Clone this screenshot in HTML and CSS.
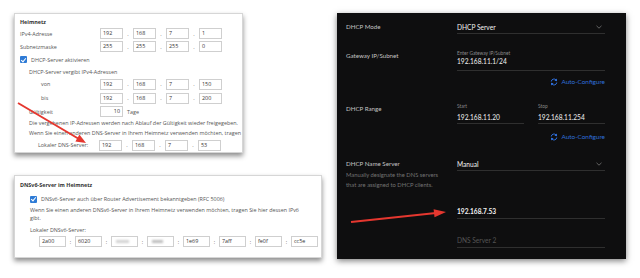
FILE: index.html
```html
<!DOCTYPE html>
<html>
<head>
    <meta charset="UTF-8">
    <title>DHCP Vergleich</title>
    <link rel="stylesheet" href="styles.css">
</head>
<body>
    <div class="page">
        <div class="left">
            <div class="box box-home">
                <div class="box-title">Heimnetz</div>
                <div class="row"><span class="lbl">IPv4-Adresse</span>
                    <span class="ip"><span class="fld">192</span><i>.</i><span class="fld">168</span><i>.</i><span class="fld">7</span><i>.</i><span class="fld">1</span></span></div>
                <div class="row"><span class="lbl">Subnetzmaske</span>
                    <span class="ip"><span class="fld">255</span><i>.</i><span class="fld">255</span><i>.</i><span class="fld">255</span><i>.</i><span class="fld">0</span></span></div>
                <div class="row"><span class="check"></span><span>DHCP-Server aktivieren</span></div>
                <div class="row row-sub"><span class="lbl in1">DHCP-Server vergibt IPv4-Adressen</span></div>
                <div class="row row-tall"><span class="lbl in2">von</span>
                    <span class="ip"><span class="fld">192</span><i>.</i><span class="fld">168</span><i>.</i><span class="fld">7</span><i>.</i><span class="fld">150</span></span></div>
                <div class="row row-tall"><span class="lbl in2">bis</span>
                    <span class="ip"><span class="fld">192</span><i>.</i><span class="fld">168</span><i>.</i><span class="fld">7</span><i>.</i><span class="fld">200</span></span></div>
                <div class="row"><span class="lbl in1">Gültigkeit</span>
                    <span class="fld fld-num">10</span><span class="unit">Tage</span></div>
                <p class="note">Die vergebenen IP-Adressen werden nach Ablauf der Gültigkeit wieder freigegeben.</p>
                <p class="note">Wenn Sie einen anderen DNS-Server in Ihrem Heimnetz verwenden möchten, tragen</p>
                <div class="row row-tall"><span class="lbl in3">Lokaler DNS-Server:</span>
                    <span class="ip"><span class="fld">192</span><i>.</i><span class="fld">168</span><i>.</i><span class="fld">7</span><i>.</i><span class="fld">53</span></span></div>
            </div>

            <div class="box box-v6">
                <div class="box-title">DNSv6-Server im Heimnetz</div>
                <div class="row row-v6"><span class="check"></span><span>DNSv6-Server auch über Router Advertisement bekanntgeben (RFC 5006)</span></div>
                <p class="note note-v6">Wenn Sie einen anderen DNSv6-Server in Ihrem Heimnetz verwenden möchten, tragen Sie hier dessen IPv6<br>gibt.</p>
                <p class="note note-v6 gap">Lokaler DNSv6-Server:</p>
                <div class="ip6">
                    <span class="fld">2a00</span><i>:</i>
                    <span class="fld">6020</span><i>:</i>
                    <span class="fld"><b class="blur"></b></span><i>:</i>
                    <span class="fld"><b class="blur blur-dark"></b></span><i>:</i>
                    <span class="fld">1e69</span><i>:</i>
                    <span class="fld">7aff</span><i>:</i>
                    <span class="fld">fe0f</span><i>:</i>
                    <span class="fld">cc5e</span>
                </div>
            </div>
        </div>

        <div class="dark">
            <div class="dk-row">
                <div class="dk-lbl">DHCP Mode</div>
                <div class="dk-field dk-select">DHCP Server
                    <svg class="chev" width="6" height="4" viewBox="0 0 6 4"><polyline points="0.5,0.8 3,3.2 5.5,0.8" fill="none" stroke="#777" stroke-width="0.8"/></svg>
                </div>
            </div>

            <div class="dk-row">
                <div class="dk-lbl dk-lbl-low">Gateway IP/Subnet</div>
                <div>
                    <div class="dk-small">Enter Gateway IP/Subnet</div>
                    <div class="dk-field dk-val dk-gw">192.168.11.1/24</div>
                    <div class="auto"><svg width="8" height="8" viewBox="0 0 16 16"><path d="M2.5 7 A5.5 5.5 0 0 1 12.2 4" fill="none" stroke="#2f6fdc" stroke-width="2"/><polygon points="14,1 14,6.5 8.8,5.6" fill="#2f6fdc"/><path d="M13.5 9 A5.5 5.5 0 0 1 3.8 12" fill="none" stroke="#2f6fdc" stroke-width="2"/><polygon points="2,15 2,9.5 7.2,10.4" fill="#2f6fdc"/></svg>Auto-Configure</div>
                </div>
            </div>

            <div class="dk-row">
                <div class="dk-lbl dk-lbl-low">DHCP Range</div>
                <div>
                    <div class="range">
                        <div>
                            <div class="dk-small">Start</div>
                            <div class="dk-field dk-val dk-rg">192.168.11.20</div>
                        </div>
                        <div>
                            <div class="dk-small">Stop</div>
                            <div class="dk-field dk-val dk-rg">192.168.11.254</div>
                        </div>
                    </div>
                    <div class="auto auto-2"><svg width="8" height="8" viewBox="0 0 16 16"><path d="M2.5 7 A5.5 5.5 0 0 1 12.2 4" fill="none" stroke="#2f6fdc" stroke-width="2"/><polygon points="14,1 14,6.5 8.8,5.6" fill="#2f6fdc"/><path d="M13.5 9 A5.5 5.5 0 0 1 3.8 12" fill="none" stroke="#2f6fdc" stroke-width="2"/><polygon points="2,15 2,9.5 7.2,10.4" fill="#2f6fdc"/></svg>Auto-Configure</div>
                </div>
            </div>

            <div class="dk-row">
                <div class="dk-ns">
                    <div class="dk-lbl">DHCP Name Server</div>
                    <div class="dk-desc">Manually designate the DNS servers<br>that are assigned to DHCP clients.</div>
                </div>
                <div class="dk-field dk-select dk-manual">Manual
                    <svg class="chev" width="6" height="4" viewBox="0 0 6 4"><polyline points="0.5,0.8 3,3.2 5.5,0.8" fill="none" stroke="#777" stroke-width="0.8"/></svg>
                </div>
            </div>

            <div class="dk-row">
                <div></div>
                <div class="dk-field dk-val dk-dns dk-strong">192.168.7.53</div>
            </div>

            <div class="dk-row">
                <div></div>
                <div class="dk-field dk-dns dk-ph">DNS Server 2</div>
            </div>
        </div>
    </div>

    <svg class="arrows" width="640" height="278" viewBox="0 0 640 278">
        <line x1="18" y1="103" x2="79" y2="139" stroke="#e5372f" stroke-width="2"/>
        <polygon points="86,143 75.4,141.4 79.4,134.5" fill="#e5372f"/>
        <line x1="351" y1="222" x2="436" y2="213" stroke="#e5372f" stroke-width="2"/>
        <polygon points="446,212 434.5,217.2 433.6,209.3" fill="#e5372f"/>
    </svg>
</body>
</html>
```

FILE: styles.css
```css
body {
    margin: 0;
    background: #ffffff;
    width: 640px;
    height: 278px;
    overflow: hidden;
    position: relative;
}

.page {
    display: flex;
    gap: 15px;
    padding: 13px 0 0 14px;
}

.left {
    width: 308px;
    display: flex;
    flex-direction: column;
    gap: 22px;
}

/* Fritz!Box boxes */
.box {
    background: #fff;
    border: 1px solid #d6d6d6;
    box-shadow: 0 3px 5px rgba(0,0,0,0.45);
    font-family: "Open Sans", sans-serif;
    font-size: 5.4px;
    color: #555;
    overflow: hidden;
    box-sizing: border-box;
}

.box-home {
    width: 229px;
    height: 140px;
    padding: 3px 0 0 5px;
}

.box-v6 {
    width: 308px;
    height: 83px;
    padding: 4px 0 0 5px;
}

.box-title {
    font-weight: bold;
    color: #333;
    line-height: 10px;
}

.row {
    display: flex;
    align-items: center;
    height: 13px;
    white-space: nowrap;
}

.row-sub {
    height: 11px;
}

.row-tall {
    height: 14px;
}

.lbl {
    width: 80px;
    box-sizing: border-box;
}

.in1 {
    padding-left: 9px;
}

.in2 {
    padding-left: 21px;
}

.in3 {
    padding-left: 18px;
    width: 79px;
}

.check {
    width: 7px;
    height: 7px;
    background: #2e7bd6;
    border-radius: 1px;
    margin-right: 4px;
    position: relative;
}

.check::after {
    content: "";
    position: absolute;
    left: 2px;
    top: 0.5px;
    width: 2px;
    height: 4px;
    border: solid #fff;
    border-width: 0 1px 1px 0;
    transform: rotate(40deg);
}

.ip, .ip6 {
    display: flex;
    align-items: center;
}

.fld {
    display: inline-block;
    width: 21px;
    height: 9px;
    line-height: 9px;
    border: 1px solid #cfcfcf;
    padding-left: 2px;
    box-sizing: content-box;
    color: #333;
}

.ip .fld {
    width: 19px;
}

.ip i, .ip6 i {
    font-style: normal;
    width: 10px;
    text-align: center;
}

.fld-num {
    width: 19px;
    text-align: right;
    padding: 0 2px 0 0;
}

.unit {
    margin-left: 4px;
}

.note {
    margin: 0;
    padding-left: 9px;
    line-height: 10px;
    white-space: nowrap;
}

.row-v6 {
    height: 14px;
    margin-top: 2px;
    padding-left: 10px;
}

.note-v6 {
    padding-left: 10px;
    line-height: 8px;
}

.note-v6.gap {
    margin-top: 4px;
}

.ip6 {
    margin-top: 2px;
    padding-left: 19px;
}

.ip6 .fld {
    width: 23px;
}

.ip6 i {
    width: 9px;
}

.blur {
    display: inline-block;
    width: 13px;
    height: 3px;
    margin: 0 0 1px 2px;
    background: #d2d2d2;
    filter: blur(1px);
    vertical-align: middle;
}

.blur-dark {
    width: 11px;
    background: #bdbdbd;
}

/* UniFi dark panel */
.dark {
    width: 289px;
    height: 246px;
    background: #0e0e0f;
    box-shadow: 0 2px 6px rgba(0,0,0,0.5);
    padding: 8px 21px 0 9px;
    box-sizing: border-box;
    font-family: Lato, sans-serif;
    color: #c9c9c9;
}

.dk-row {
    display: grid;
    grid-template-columns: 111px 148px;
}

.dk-lbl {
    font-size: 6.2px;
    line-height: 12px;
    color: #c4c4c4;
}

.dk-lbl-low {
    margin-top: 16px;
}

.dk-field {
    border-bottom: 1px solid #2f2f2f;
    color: #f2f2f2;
    font-size: 6.6px;
}

.dk-strong {
    font-weight: bold;
}

.dk-select {
    height: 12px;
    line-height: 12px;
    display: flex;
    justify-content: space-between;
    align-items: center;
    padding-right: 3px;
}

.chev {
    display: block;
}

.dk-small {
    font-size: 4.8px;
    line-height: 6px;
    color: #8a8a8a;
    margin-top: 16px;
}

.dk-val {
    line-height: 10px;
}

.dk-gw {
    padding-bottom: 4px;
}

.range {
    display: grid;
    grid-template-columns: 1fr 1fr;
    gap: 14px;
}

.dk-rg {
    margin-top: 3px;
    padding-bottom: 1px;
}

.auto {
    display: flex;
    justify-content: flex-end;
    align-items: center;
    gap: 3px;
    margin-top: 6px;
    line-height: 10px;
    font-size: 6.4px;
    color: #2f6fdc;
}

.auto-2 {
    margin-top: 8px;
}

.dk-ns {
    margin-top: 16px;
}

.dk-manual {
    margin-top: 15px;
    height: 13px;
}

.dk-desc {
    font-size: 5.8px;
    line-height: 10px;
    color: #737373;
    white-space: nowrap;
}

.dk-dns {
    margin-top: 16px;
    line-height: 10px;
    padding-bottom: 2px;
}

.dk-ph {
    color: #555;
}

.arrows {
    position: absolute;
    left: 0;
    top: 0;
    pointer-events: none;
}
```
